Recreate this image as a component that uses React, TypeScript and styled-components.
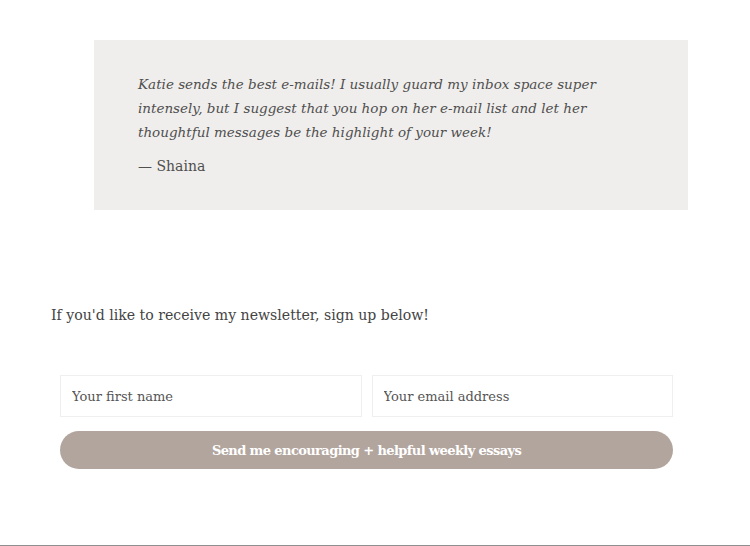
import React from 'react';
import styled, { createGlobalStyle } from 'styled-components';

const GlobalStyle = createGlobalStyle`
  html, body {
    margin: 0;
    padding: 0;
    background: #ffffff;
  }
  body {
    font-family: "DejaVu Serif", "Liberation Serif", serif;
    color: #444444;
  }
`;

const Page = styled.div`
  width: 750px;
  height: 546px;
  box-sizing: border-box;
  padding-top: 40px;
  border-bottom: 1px solid #8f8f8f;
  overflow: hidden;
`;

const Quote = styled.blockquote`
  margin: 0 0 0 94px;
  width: 594px;
  height: 170px;
  box-sizing: border-box;
  background: #efeeec;
  padding: 32px 44px 0;
`;

const QuoteText = styled.p`
  margin: 0;
  font-style: italic;
  font-size: 13.5px;
  line-height: 24px;
  color: #4f4f4f;
`;

const Author = styled.p`
  margin: 10px 0 0;
  font-size: 14px;
  line-height: 24px;
  color: #4f4f4f;
`;

const Intro = styled.p`
  margin: 93px 0 0 51px;
  font-size: 14.1px;
  line-height: 24px;
  color: #444444;
`;

const Form = styled.form`
  margin: 48px 0 0 60px;
  width: 613px;
  display: flex;
  flex-direction: column;
  gap: 14px;
`;

const Row = styled.div`
  display: flex;
  gap: 10px;
`;

const Field = styled.input`
  flex: 1;
  min-width: 0;
  height: 42px;
  box-sizing: border-box;
  border: 1px solid #efefef;
  background: #ffffff;
  padding: 0 11px;
  font-family: "DejaVu Serif", "Liberation Serif", serif;
  font-size: 13px;
  color: #444444;
  outline: none;

  &::placeholder {
    color: #555555;
  }
`;

const Submit = styled.button`
  height: 38px;
  border: none;
  border-radius: 19px;
  background: #b2a59e;
  color: #ffffff;
  font-family: "DejaVu Serif", "Liberation Serif", serif;
  font-weight: bold;
  font-size: 13px;
  letter-spacing: -0.6px;
  cursor: pointer;
`;

export default function App() {
  return (
    <>
      <GlobalStyle />
      <Page>
        <Quote>
          <QuoteText>
            Katie sends the best e-mails! I usually guard my inbox space super
            intensely, but I suggest that you hop on her e-mail list and let her
            thoughtful messages be the highlight of your week!
          </QuoteText>
          <Author>— Shaina</Author>
        </Quote>
        <Intro>If you'd like to receive my newsletter, sign up below!</Intro>
        <Form onSubmit={(e) => e.preventDefault()}>
          <Row>
            <Field type="text" placeholder="Your first name" />
            <Field type="email" placeholder="Your email address" />
          </Row>
          <Submit type="submit">Send me encouraging + helpful weekly essays</Submit>
        </Form>
      </Page>
    </>
  );
}
